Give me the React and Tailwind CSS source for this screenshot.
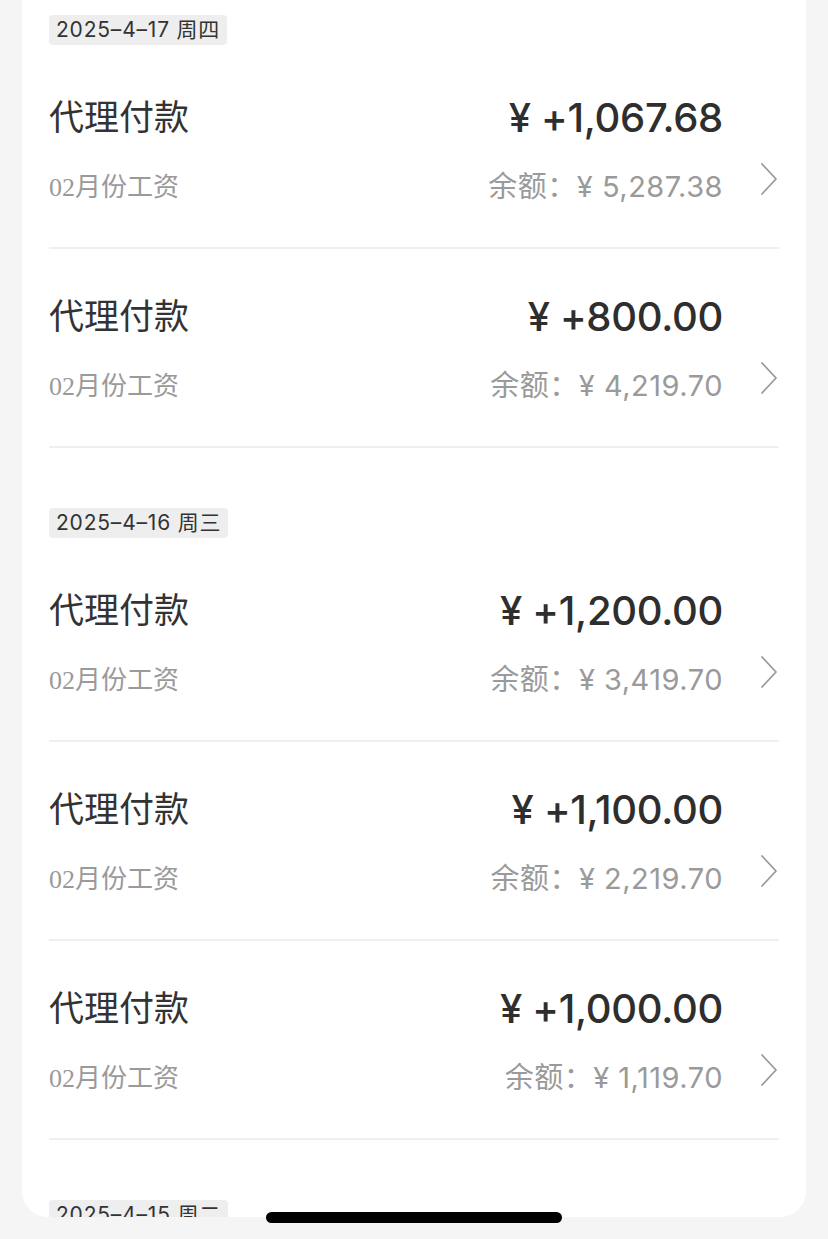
import React from "react";

const groups = [
  {
    date: "2025–4–17 周四",
    rows: [
      { amount: "¥ +1,067.68", balance: "¥ 5,287.38" },
      { amount: "¥ +800.00", balance: "¥ 4,219.70" },
    ],
  },
  {
    date: "2025–4–16 周三",
    rows: [
      { amount: "¥ +1,200.00", balance: "¥ 3,419.70" },
      { amount: "¥ +1,100.00", balance: "¥ 2,219.70" },
      { amount: "¥ +1,000.00", balance: "¥ 1,119.70" },
    ],
  },
  {
    date: "2025–4–15 周二",
    rows: [{ amount: "¥ +900.00", balance: "¥ 119.70" }],
  },
];

const font = { fontFamily: '"Inter", "Noto Sans CJK SC", sans-serif' };

function Chevron() {
  return (
    <svg width="20" height="34" viewBox="0 0 20 34" fill="none">
      <polyline points="3,2 17,17 3,32" stroke="#9a9a9a" strokeWidth="1.8" strokeLinecap="round" strokeLinejoin="round" />
    </svg>
  );
}

function Row({ amount, balance }) {
  return (
    <div className="flex border-b-2 border-[#efefef] pt-[45px] pb-[41px]">
      <div className="flex-1">
        <div className="text-[35px] leading-[44px] text-[#333]">代理付款</div>
        <div className="mt-[30px] text-[26px] leading-[36px] text-[#9a9a9a]">
          <span style={{ fontFamily: '"Liberation Serif", serif' }}>02</span>月份工资
        </div>
      </div>
      <div className="text-right">
        <div className="text-[40px] leading-[46px] font-medium text-[#2e2e2e] tracking-[-0.3px]">{amount}</div>
        <div className="mt-[28px] text-[29px] leading-[36px] tracking-[0.5px] text-[#9a9a9a]">余额：{balance}</div>
      </div>
      <div className="w-[56px] flex justify-end pt-[67px]">
        <Chevron />
      </div>
    </div>
  );
}

export default function App() {
  return (
    <div className="relative h-[1239px] w-[828px] overflow-hidden bg-[#f5f5f5]" style={font}>
      <div className="mx-[22px] h-[1217px] overflow-hidden rounded-b-[26px] bg-white px-[27px] pt-[15px]">
        {groups.map((g, i) => (
          <div key={i} className={i > 0 ? "mt-[60px]" : ""}>
            <div className="inline-block rounded-[4px] bg-[#eeeeee] px-[7px] text-[21px] leading-[30px] tracking-[0.8px] text-[#333]">
              {g.date}
            </div>
            <div className="mt-[5px]">
              {g.rows.map((r, j) => (
                <Row key={j} {...r} />
              ))}
            </div>
          </div>
        ))}
      </div>
      <div className="absolute left-[266px] top-[1212px] h-[11px] w-[296px] rounded-full bg-black" />
    </div>
  );
}
